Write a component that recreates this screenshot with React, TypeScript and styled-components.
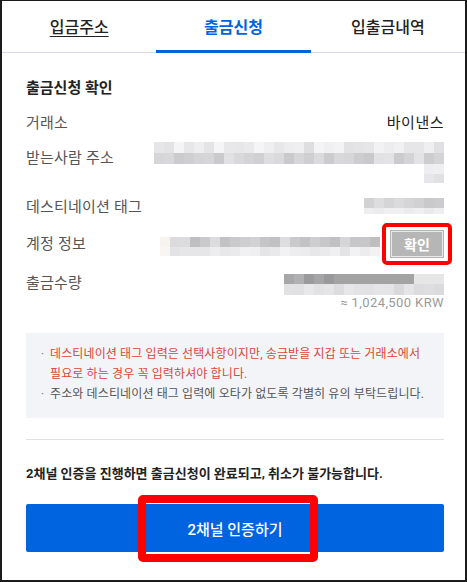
import styled, { createGlobalStyle } from "styled-components";

const GlobalStyle = createGlobalStyle`
  html, body {
    margin: 0;
    padding: 0;
    background: #ffffff;
  }
  body {
    font-family: Roboto, "Noto Sans CJK KR", sans-serif;
    color: #222222;
  }
`;

// pixelated (blurred-out) values
function greyRow(n: number, base: number, spread: number, seed: number) {
  let s = seed;
  return Array.from({ length: n }, () => {
    s = (s * 9301 + 49297) % 233280;
    const v = Math.round(base - spread / 2 + (s / 233280) * spread);
    return `rgb(${v},${v},${Math.min(255, v + 3)})`;
  });
}

function onlyLast(n: number, keep: number, base: number, seed: number) {
  const row = greyRow(n, base, 14, seed);
  return row.map((c, i) => (i >= n - keep ? c : null));
}

const addressCells = [
  greyRow(29, 234, 24, 3),
  greyRow(29, 214, 28, 7),
  onlyLast(29, 2, 236, 11),
  onlyLast(29, 2, 226, 13),
];

const tagCells = [greyRow(8, 212, 22, 5), greyRow(8, 238, 12, 9)];

const accountCells = [
  ["#f7f3ee", ...greyRow(21, 206, 34, 17)],
  ["#f8f6f3", ...greyRow(21, 234, 16, 21)],
];

const amountRow1 = greyRow(16, 170, 50, 31).map((c, i) =>
  i >= 5 && i <= 12 ? "#a3a3a3" : i >= 13 ? "#e6e6e6" : c
);
const amountCells = [amountRow1, greyRow(16, 222, 20, 37)];

type Cells = (string | null)[][];

function Mosaic({ cells, rows, $top = 0 }: { cells: Cells; rows: number[]; $top?: number }) {
  return (
    <MosaicGrid $cols={cells[0].length} $rows={rows} $top={$top}>
      {cells.flatMap((row, r) =>
        row.map((c, i) => <Cell key={`${r}-${i}`} $bg={c ?? "transparent"} />)
      )}
    </MosaicGrid>
  );
}

export default function App() {
  return (
    <>
      <GlobalStyle />
      <Frame>
        <Tabs>
          <Tab $underline>입금주소</Tab>
          <Tab $active>출금신청</Tab>
          <Tab>입출금내역</Tab>
        </Tabs>
        <Body>
          <Title>출금신청 확인</Title>
          <Row $gap={14}>
            <Label>거래소</Label>
            <Value>바이낸스</Value>
          </Row>
          <Row $gap={13}>
            <Label>받는사람 주소</Label>
            <Mosaic cells={addressCells} rows={[11, 11, 10, 9]} $top={-5} />
          </Row>
          <Row $gap={13}>
            <Label>데스티네이션 태그</Label>
            <Mosaic cells={tagCells} rows={[10, 6]} $top={2} />
          </Row>
          <Row $gap={15}>
            <Label>계정 정보</Label>
            <AccountValue>
              <Mosaic cells={accountCells} rows={[10, 9]} $top={5} />
              <ConfirmWrap>
                <ConfirmButton>확인</ConfirmButton>
                <Highlight $inset="-7px -8px" $width={4} />
              </ConfirmWrap>
            </AccountValue>
          </Row>
          <Row $gap={14}>
            <Label>출금수량</Label>
            <AmountCol>
              <Mosaic cells={amountCells} rows={[10, 11]} />
              <Krw>≈ 1,024,500 KRW</Krw>
            </AmountCol>
          </Row>
          <Notice>
            <NoticeItem $tone="warn">
              <Bullet>·</Bullet>
              <span>데스티네이션 태그 입력은 선택사항이지만, 송금받을 지갑 또는 거래소에서 필요로 하는 경우 꼭 입력하셔야 합니다.</span>
            </NoticeItem>
            <NoticeItem>
              <Bullet>·</Bullet>
              <span>주소와 데스티네이션 태그 입력에 오타가 없도록 각별히 유의 부탁드립니다.</span>
            </NoticeItem>
          </Notice>
          <Divider />
          <Warning>2채널 인증을 진행하면 출금신청이 완료되고, 취소가 불가능합니다.</Warning>
          <SubmitButton>
            2채널 인증하기
            <Highlight $inset="-9px 126px -10px 112px" $width={8} />
          </SubmitButton>
        </Body>
      </Frame>
    </>
  );
}

const Frame = styled.div`
  box-sizing: border-box;
  width: 467px;
  height: 582px;
  border: 2px solid #1b1b1b;
  border-top-width: 1px;
  display: flex;
  flex-direction: column;
  background: #ffffff;
`;

const Tabs = styled.div`
  display: grid;
  grid-template-columns: repeat(3, 1fr);
  height: 51px;
  border-bottom: 1px solid #d9d9e2;
`;

const Tab = styled.div<{ $active?: boolean; $underline?: boolean }>`
  display: flex;
  align-items: center;
  justify-content: center;
  height: 52px;
  margin-bottom: -1px;
  padding-bottom: 2px;
  box-sizing: border-box;
  font-size: 16px;
  font-weight: ${(p) => (p.$active ? 700 : 500)};
  color: ${(p) => (p.$active ? "#0064e0" : "#222222")};
  text-decoration: ${(p) => (p.$underline ? "underline" : "none")};
  text-underline-offset: 3px;
  box-shadow: ${(p) => (p.$active ? "inset 0 -3px 0 #0064e0" : "none")};
`;

const Body = styled.div`
  display: flex;
  flex-direction: column;
  padding: 25px 21px 0 24px;
`;

const Title = styled.div`
  font-size: 15px;
  line-height: 20px;
  font-weight: 700;
  color: #222222;
`;

const Row = styled.div<{ $gap: number }>`
  display: flex;
  justify-content: space-between;
  align-items: flex-start;
  margin-top: ${(p) => p.$gap}px;
`;

const Label = styled.div`
  flex-shrink: 0;
  font-size: 15px;
  line-height: 22px;
  letter-spacing: 0.2px;
  color: #555555;
`;

const Value = styled.div`
  font-size: 15px;
  line-height: 22px;
  letter-spacing: 0.5px;
  color: #222222;
`;

const MosaicGrid = styled.div<{ $cols: number; $rows: number[]; $top: number }>`
  display: grid;
  grid-template-columns: repeat(${(p) => p.$cols}, 10px);
  grid-template-rows: ${(p) => p.$rows.map((r) => `${r}px`).join(" ")};
  margin-top: ${(p) => p.$top}px;
`;

const Cell = styled.div<{ $bg: string }>`
  background: ${(p) => p.$bg};
`;

const AccountValue = styled.div`
  display: flex;
  align-items: center;
  gap: 10px;
  margin-top: -3px;
`;

const ConfirmWrap = styled.div`
  position: relative;
  display: flex;
`;

const ConfirmButton = styled.button`
  width: 54px;
  height: 28px;
  padding: 0;
  border: 1px solid #b3b3b3;
  background: #b6b6b6;
  box-shadow: inset 0 0 0 1px #e9e9e9;
  color: #ffffff;
  font-family: Roboto, "Noto Sans CJK KR", sans-serif;
  font-size: 14px;
  font-weight: 700;
`;

const Highlight = styled.span<{ $inset: string; $width: number }>`
  position: absolute;
  inset: ${(p) => p.$inset};
  border: ${(p) => p.$width}px solid #ff0000;
  border-radius: 5px;
  pointer-events: none;
`;

const AmountCol = styled.div`
  display: flex;
  flex-direction: column;
  align-items: flex-end;
  margin-top: 2px;
`;

const Krw = styled.div`
  font-family: Roboto, sans-serif;
  font-size: 13px;
  line-height: 16px;
  letter-spacing: 0.4px;
  color: #9a9a9a;
`;

const Notice = styled.div`
  margin-top: 22px;
  padding: 11px 12px 14px 15px;
  background: #f3f4f8;
`;

const NoticeItem = styled.div<{ $tone?: "warn" }>`
  display: flex;
  font-size: 12px;
  line-height: 20px;
  letter-spacing: 0.12px;
  word-break: keep-all;
  color: ${(p) => (p.$tone === "warn" ? "#d9473a" : "#555555")};
`;

const Bullet = styled.span`
  flex-shrink: 0;
  width: 9px;
  color: #777777;
`;

const Divider = styled.div`
  margin-top: 21px;
  height: 1px;
  background: #e0e0e0;
`;

const Warning = styled.div`
  margin-top: 24px;
  font-size: 13px;
  line-height: 20px;
  font-weight: 700;
  color: #222222;
`;

const SubmitButton = styled.button`
  position: relative;
  margin-top: 20px;
  height: 48px;
  width: 100%;
  border: none;
  border-radius: 2px;
  background: #0064e0;
  color: #ffffff;
  font-family: Roboto, "Noto Sans CJK KR", sans-serif;
  font-size: 15px;
  font-weight: 500;
`;
